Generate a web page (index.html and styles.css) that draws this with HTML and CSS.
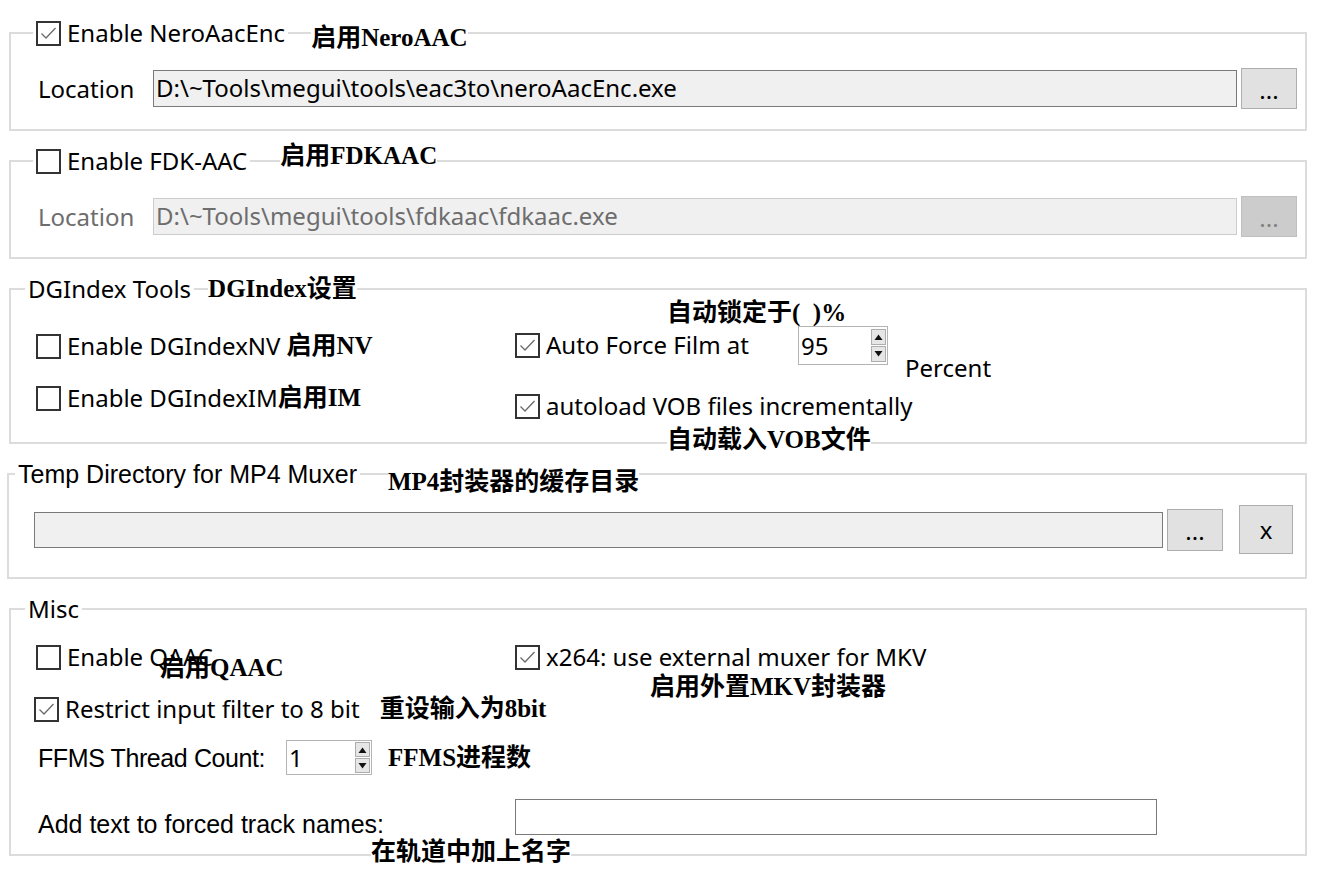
FILE: index.html
```html
<!DOCTYPE html>
<html>
<head>
<meta charset="utf-8">
<title>Settings</title>
<link rel="stylesheet" href="styles.css">
</head>
<body>
<div class="page">

  <section class="group g1">
    <div class="legend-row">
      <div class="legend">
        <span class="cb"><svg viewBox="0 0 21 21" width="21" height="21"><path d="M3.5 10.5 L8 15 L17.5 5" fill="none" stroke="#6a6a6a" stroke-width="1.3"/></svg></span>
        <span class="lbl">Enable NeroAacEnc</span>
      </div>
      <span class="note n-nero">启用NeroAAC</span>
    </div>
    <div class="loc-row">
      <span class="loc-label">Location</span>
      <div class="textbox">D:\~Tools\megui\tools\eac3to\neroAacEnc.exe</div>
      <button class="btn browse">...</button>
    </div>
  </section>

  <section class="group g2">
    <div class="legend-row">
      <div class="legend">
        <span class="cb"></span>
        <span class="lbl">Enable FDK-AAC</span>
      </div>
      <span class="note n-fdk">启用FDKAAC</span>
    </div>
    <div class="loc-row disabled">
      <span class="loc-label">Location</span>
      <div class="textbox">D:\~Tools\megui\tools\fdkaac\fdkaac.exe</div>
      <button class="btn browse">...</button>
    </div>
  </section>

  <section class="group g3">
    <div class="legend-row">
      <div class="legend"><span class="lbl">DGIndex Tools</span></div>
      <span class="note n-dg">DGIndex设置</span>
    </div>
    <div class="two-col">
      <div class="col-left">
        <div class="check-row r-nv">
          <span class="cb"></span>
          <span class="lbl">Enable DGIndexNV</span>
          <span class="note n-nv">启用NV</span>
        </div>
        <div class="check-row r-im">
          <span class="cb"></span>
          <span class="lbl">Enable DGIndexIM</span>
          <span class="note n-im">启用IM</span>
        </div>
      </div>
      <div class="col-right">
        <span class="note n-force">自动锁定于(&nbsp;&nbsp;)%</span>
        <div class="force-row">
          <span class="cb"><svg viewBox="0 0 21 21" width="21" height="21"><path d="M3.5 10.5 L8 15 L17.5 5" fill="none" stroke="#6a6a6a" stroke-width="1.3"/></svg></span>
          <span class="lbl force-lbl">Auto Force Film at</span>
          <div class="spin spin-force">
            <span class="spin-val">95</span>
            <span class="spin-btns">
              <span class="spin-b"><svg viewBox="0 0 13 14" width="13" height="14"><path d="M2.5 10 L6.5 4.5 L10.5 10 Z" fill="#111"/></svg></span>
              <span class="spin-b"><svg viewBox="0 0 13 14" width="13" height="14"><path d="M2.5 4 L6.5 9.5 L10.5 4 Z" fill="#111"/></svg></span>
            </span>
          </div>
          <span class="lbl percent">Percent</span>
        </div>
        <div class="check-row r-vob">
          <span class="cb"><svg viewBox="0 0 21 21" width="21" height="21"><path d="M3.5 10.5 L8 15 L17.5 5" fill="none" stroke="#6a6a6a" stroke-width="1.3"/></svg></span>
          <span class="lbl">autoload VOB files incrementally</span>
        </div>
        <span class="note n-vob">自动载入VOB文件</span>
      </div>
    </div>
  </section>

  <section class="group g4">
    <div class="legend-row">
      <div class="legend"><span class="lbl narrow">Temp Directory for MP4 Muxer</span></div>
      <span class="note n-mp4">MP4封装器的缓存目录</span>
    </div>
    <div class="temp-row">
      <div class="textbox temp-box"></div>
      <button class="btn browse b-temp">...</button>
      <button class="btn clear">x</button>
    </div>
  </section>

  <section class="group g5">
    <div class="legend-row">
      <div class="legend"><span class="lbl">Misc</span></div>
    </div>
    <div class="misc-grid">
      <div class="check-row r-qaac">
        <span class="cb"></span>
        <span class="lbl">Enable QAAC</span>
        <span class="note n-qaac">启用QAAC</span>
      </div>
      <div class="col-mkv">
        <div class="check-row">
          <span class="cb"><svg viewBox="0 0 21 21" width="21" height="21"><path d="M3.5 10.5 L8 15 L17.5 5" fill="none" stroke="#6a6a6a" stroke-width="1.3"/></svg></span>
          <span class="lbl">x264: use external muxer for MKV</span>
        </div>
        <span class="note n-mkv">启用外置MKV封装器</span>
      </div>
    </div>
    <div class="check-row r-8bit">
      <span class="cb"><svg viewBox="0 0 21 21" width="21" height="21"><path d="M3.5 10.5 L8 15 L17.5 5" fill="none" stroke="#6a6a6a" stroke-width="1.3"/></svg></span>
      <span class="lbl">Restrict input filter to 8 bit</span>
      <span class="note n-8bit">重设输入为8bit</span>
    </div>
    <div class="ffms-row">
      <span class="lbl narrow ffms-lbl">FFMS Thread Count:</span>
      <div class="spin spin-ffms">
        <span class="spin-val">1</span>
        <span class="spin-btns">
          <span class="spin-b"><svg viewBox="0 0 13 14" width="13" height="14"><path d="M2.5 10 L6.5 4.5 L10.5 10 Z" fill="#111"/></svg></span>
          <span class="spin-b"><svg viewBox="0 0 13 14" width="13" height="14"><path d="M2.5 4 L6.5 9.5 L10.5 4 Z" fill="#111"/></svg></span>
        </span>
      </div>
      <span class="note n-ffms">FFMS进程数</span>
    </div>
    <div class="track-row">
      <span class="lbl narrow track-lbl">Add text to forced track names:</span>
      <div class="textbox white-box"></div>
    </div>
    <span class="note n-track">在轨道中加上名字</span>
  </section>

</div>
</body>
</html>
```

FILE: styles.css
```css
* { box-sizing: border-box; }
html, body { margin: 0; padding: 0; background: #fff; }
body {
  width: 1323px;
  height: 871px;
  overflow: hidden;
  font-family: "Noto Sans", "Liberation Sans", sans-serif;
  font-size: 24px;
  color: #000;
}
.page { padding-top: 32px; }

.group {
  border: 2px solid #dcdcdc;
  margin: 0 16px 29px 9px;
}
.legend-row {
  display: flex;
  align-items: center;
  height: 28px;
  margin-top: -15px;
  margin-left: 22px;
}
.legend {
  display: flex;
  align-items: center;
  height: 28px;
  padding: 0 3px;
  background: #fff;
  gap: 6px;
}
.lbl { white-space: nowrap; line-height: 28px; }
.narrow {
  font-family: "Liberation Sans", sans-serif;
  font-size: 25px;
}
.note {
  display: block;
  background: #fff;
  font-family: "Liberation Serif", "Noto Sans CJK SC", serif;
  font-weight: bold;
  font-size: 25px;
  line-height: 24px;
  height: 24px;
  white-space: nowrap;
  flex: none;
}

/* checkbox */
.cb {
  width: 25px;
  height: 25px;
  border: 2px solid #333;
  background: #fff;
  display: inline-flex;
  flex: none;
}
.cb svg { display: block; }

/* location rows */
.loc-row {
  display: flex;
  align-items: center;
  height: 41px;
  margin: 21px 0 20px;
  padding: 0 8px 0 27px;
}
.loc-label { width: 115px; flex: none; }
.textbox {
  width: 1084px;
  height: 37px;
  border: 1px solid #7a7a7a;
  background: #f0f0f0;
  padding-left: 2px;
  line-height: 34px;
  white-space: nowrap;
  overflow: hidden;
  flex: none;
}
.btn {
  font-family: "Noto Sans", "Liberation Sans", sans-serif;
  font-size: 24px;
  color: #000;
  width: 56px;
  height: 41px;
  margin-left: 4px;
  border: 1px solid #adadad;
  background: #e1e1e1;
  padding: 0;
  flex: none;
}
.browse { line-height: 30px; padding-top: 2px; }
.disabled { color: #6d6d6d; }
.disabled .textbox { border-color: #cccccc; }
.disabled .btn { background: #cccccc; border-color: #bfbfbf; color: #838383; }

.n-nero { margin-left: 23px; margin-top: 9px; }
.n-fdk { margin-left: 30px; margin-top: -10px; }

/* DGIndex */
.g3 .legend-row { margin-left: 14px; }
.n-dg { margin-left: 14px; margin-top: 0; }
.two-col {
  display: grid;
  grid-template-columns: 479px 1fr;
  padding-left: 25px;
}
.col-left, .col-right { display: flex; flex-direction: column; }
.check-row {
  display: flex;
  align-items: center;
  height: 28px;
  gap: 6px;
}
.r-nv { margin-top: 29px; }
.r-im { margin-top: 24px; }
.n-nv { margin-left: 0; }
.n-im { margin-left: -6px; }
.n-force { margin: -2px 0 0 152px; align-self: flex-start; }
.force-row {
  display: flex;
  align-items: flex-start;
  margin-top: 1px;
}
.force-row .cb { margin-top: 7px; }
.force-lbl { width: 252px; margin-left: 6px; margin-top: 5px; }
.spin {
  display: flex;
  border: 1px solid #b4b4b4;
  background: #fff;
  flex: none;
}
.spin-force { width: 90px; height: 39px; }
.spin-val { flex: 1; padding-left: 2px; line-height: 37px; }
.spin-btns {
  display: flex;
  flex-direction: column;
  justify-content: center;
  width: 15px;
  margin-right: 1px;
}
.spin-b {
  display: flex;
  align-items: center;
  justify-content: center;
  width: 15px;
  height: 16px;
  background: #e6e6e6;
  border: 1px solid #adadad;
}
.spin-b + .spin-b { margin-top: 1px; }
.percent { margin-left: 17px; margin-top: 28px; }
.r-vob { margin-top: 10px; }
.n-vob { margin: 8px 0 -10px 152px; align-self: flex-start; }

/* Temp dir */
.g4 { margin-left: 7px; }
.g4 .legend-row { margin-left: 6px; }
.n-mp4 { margin-left: 28px; margin-top: 16px; }
.temp-row {
  display: flex;
  align-items: center;
  height: 49px;
  margin: 17px 0 23px;
  padding-left: 25px;
}
.temp-box { width: 1129px; height: 36px; }
.b-temp { height: 42px; }
.clear { width: 54px; height: 49px; margin-left: 16px; }

/* Misc */
.g5 .legend-row { margin-left: 14px; }
.misc-grid {
  display: grid;
  grid-template-columns: 479px 1fr;
  padding-left: 25px;
  margin-top: 20px;
}
.r-qaac { position: relative; }
.n-qaac { position: absolute; left: 124px; top: 13px; background: transparent; }
.col-mkv { display: flex; flex-direction: column; }
.n-mkv { margin: 4px 0 -28px 135px; align-self: flex-start; background: transparent; }
.r-8bit { margin: 24px 0 0 23px; }
.n-8bit { margin-left: 14px; }
.ffms-row {
  display: flex;
  align-items: center;
  height: 35px;
  margin-top: 17px;
  padding-left: 27px;
}
.ffms-lbl { width: 248px; letter-spacing: -0.4px; }
.spin-ffms { width: 86px; height: 35px; }
.spin-ffms .spin-val { line-height: 33px; }
.spin-ffms .spin-b { height: 15px; }
.n-ffms { margin-left: 16px; }
.track-row {
  display: flex;
  align-items: center;
  height: 36px;
  margin-top: 24px;
  padding-left: 27px;
}
.track-lbl { width: 477px; margin-top: 14px; }
.white-box { width: 642px; height: 36px; background: #fff; }
.n-track { margin: 5px 0 -10px 360px; align-self: flex-start; width: max-content; }
```
